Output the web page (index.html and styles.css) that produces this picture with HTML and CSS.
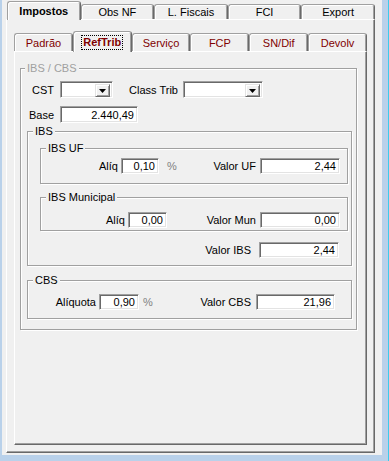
FILE: index.html
```html
<!DOCTYPE html>
<html lang="pt-br">
<head>
  <meta charset="UTF-8" />
  <title>Impostos - RefTrib</title>
  <link rel="stylesheet" href="styles.css">
</head>
<body>

<div class="window">
  <div class="outer">
    <div class="tabrow">
      <div class="tab active">Impostos</div>
      <div class="tab">Obs NF</div>
      <div class="tab">L. Fiscais</div>
      <div class="tab">FCI</div>
      <div class="tab">Export</div>
    </div>

    <div class="page outer-page">
      <div class="inner">
        <div class="tabrow">
          <div class="tab sub">Padrão</div>
          <div class="tab sub active"><span class="focus">RefTrib</span></div>
          <div class="tab sub">Serviço</div>
          <div class="tab sub">FCP</div>
          <div class="tab sub">SN/Dif</div>
          <div class="tab sub">Devolv</div>
        </div>

        <div class="page inner-page">
          <!-- IBS / CBS -->
          <fieldset class="group grp-main">
            <legend class="off">IBS / CBS</legend>

            <div class="row row-cst">
              <span class="lbl lbl-cst">CST</span>
              <div class="combo combo-cst">
                <span class="combo-btn"><svg width="7" height="4"><path d="M0 0h7L3.5 4z"/></svg></span>
              </div>
              <span class="lbl lbl-class">Class Trib</span>
              <div class="combo combo-class">
                <span class="combo-btn"><svg width="7" height="4"><path d="M0 0h7L3.5 4z"/></svg></span>
              </div>
            </div>

            <div class="row row-base">
              <span class="lbl lbl-cst">Base</span>
              <input class="inp inp-base" type="text" value="2.440,49" readonly>
            </div>

            <fieldset class="group grp-ibs">
              <legend>IBS</legend>

              <fieldset class="group grp-sub grp-uf">
                <legend>IBS UF</legend>
                <div class="row row-uf">
                  <span class="lbl lbl-aliq-uf">Alíq</span>
                  <input class="inp inp-aliq-uf" type="text" value="0,10" readonly>
                  <span class="pct">%</span>
                  <div class="rgrp rgrp-sub">
                    <span class="lbl">Valor UF</span>
                    <input class="inp inp-valor" type="text" value="2,44" readonly>
                  </div>
                </div>
              </fieldset>

              <fieldset class="group grp-sub grp-mun">
                <legend>IBS Municipal</legend>
                <div class="row row-mun">
                  <span class="lbl lbl-aliq-mun">Alíq</span>
                  <input class="inp inp-aliq-mun" type="text" value="0,00" readonly>
                  <div class="rgrp rgrp-sub">
                    <span class="lbl">Valor Mun</span>
                    <input class="inp inp-valor" type="text" value="0,00" readonly>
                  </div>
                </div>
              </fieldset>

              <div class="row row-vibs">
                <div class="rgrp rgrp-ibs">
                  <span class="lbl">Valor IBS</span>
                  <input class="inp inp-valor" type="text" value="2,44" readonly>
                </div>
              </div>
            </fieldset>

            <fieldset class="group grp-cbs">
              <legend>CBS</legend>
              <div class="row row-cbs">
                <span class="lbl lbl-aliq-cbs">Alíquota</span>
                <input class="inp inp-aliq-cbs" type="text" value="0,90" readonly>
                <span class="pct pct-cbs">%</span>
                <div class="rgrp rgrp-cbs">
                  <span class="lbl">Valor CBS</span>
                  <input class="inp inp-vcbs" type="text" value="21,96" readonly>
                </div>
              </div>
            </fieldset>
          </fieldset>
        </div>
      </div>
    </div>
  </div>
</div>

</body>
</html>
```

FILE: styles.css
```css
* {
  box-sizing: border-box;
}
body {
  margin: 0;
  height: 461px;
  background: #b9d1ea;
  border-right: 1px solid #3ccbec;
  font-family: 'Liberation Sans', Arial, sans-serif;
  font-size: 11px;
  color: #000;
}
.window {
  margin-left: 2px;
  width: 380px;
  height: 455px;
  background: #f0f0f0;
  padding: 1px 0 0 4px;
}

/* abas */
.outer {
  width: 369px;
}
.tabrow {
  display: flex;
  align-items: flex-end;
}
.outer > .tabrow {
  height: 18px;
  padding-left: 1px;
}
.inner > .tabrow {
  height: 20px;
}
.tab {
  flex: 1;
  height: 15px;
  background: #f0f0f0;
  border: 1px solid #a0a0a0;
  border-right-color: #696969;
  border-bottom: 0;
  border-radius: 3px 3px 0 0;
  box-shadow: inset 1px 1px #fff, inset -1px 0 #a0a0a0;
  text-align: center;
  line-height: 14px;
  white-space: nowrap;
}
.tab.active {
  height: 19px;
  margin-bottom: -1px;
  position: relative;
  z-index: 1;
  padding-top: 2px;
  line-height: 15px;
  font-weight: bold;
}
.tab.sub {
  height: 18px;
  padding-top: 1px;
  line-height: 16px;
  color: #800000;
}
.tab.sub.active {
  height: 21px;
  padding-top: 4px;
  line-height: 13px;
}
.focus {
  display: inline-block;
  padding: 0 1px;
  outline: 1px dotted #000;
}

/* paginas */
.page {
  border: 1px solid;
  border-color: #fff #696969 #696969 #fff;
  box-shadow: inset -1px -1px #a0a0a0;
}
.outer-page {
  height: 434px;
  padding: 11px 0 0 7px;
}
.inner {
  width: 353px;
}
.inner-page {
  height: 394px;
  padding: 10px 0 0 5px;
}

/* grupos */
.group {
  margin: 0;
  padding: 0;
  min-width: 0;
  border: 1px solid #a0a0a0;
  box-shadow: inset 1px 1px #fff, 1px 1px #fff;
}
.group legend {
  margin-left: 5px;
  padding: 0 2px;
  line-height: 13px;
  background: #f0f0f0;
}
.group legend.off {
  margin-left: 4px;
  color: #a0a0a0;
}
.grp-main {
  width: 337px;
  padding-bottom: 10px;
}
.grp-ibs {
  width: 325px;
  margin: 2px 0 0 6px;
  padding-bottom: 7px;
}
.grp-sub {
  width: 308px;
  margin-left: 12px;
}
.grp-uf {
  margin-top: 4px;
  padding-bottom: 9px;
}
.grp-mun {
  margin-top: 7px;
  padding-bottom: 2px;
}
.grp-cbs {
  width: 325px;
  margin: 8px 0 0 6px;
  padding-bottom: 8px;
}

/* linhas */
.row {
  display: flex;
  align-items: center;
}
.lbl {
  text-align: right;
  white-space: nowrap;
}
.row-cst {
  margin-top: 6px;
}
.lbl-cst {
  width: 33px;
}
.combo-cst {
  margin-left: 6px;
  width: 53px;
}
.lbl-class {
  margin-left: 16px;
  width: 49px;
}
.combo-class {
  margin-left: 5px;
  width: 80px;
}
.row-base {
  margin-top: 8px;
}
.row-uf {
  margin-top: 3px;
}
.row-mun {
  margin-top: 8px;
}
.row-vibs {
  margin-top: 11px;
}
.row-cbs {
  margin-top: 7px;
}
.lbl-aliq-uf {
  width: 77px;
}
.lbl-aliq-mun {
  width: 84px;
}
.lbl-aliq-cbs {
  width: 68px;
}
.pct {
  margin-left: 8px;
  color: #808080;
}
.pct-cbs {
  margin-left: 4px;
}
.rgrp {
  margin-left: auto;
  display: flex;
  align-items: center;
}
.rgrp-sub {
  margin-right: 7px;
}
.rgrp-sub .inp {
  margin-left: 4px;
}
.rgrp-ibs {
  margin-right: 12px;
}
.rgrp-ibs .inp {
  margin-left: 8px;
}
.rgrp-cbs {
  margin-right: 16px;
}

/* campos */
.inp {
  height: 16px;
  margin: 0;
  padding: 0 3px 0 0;
  border: 1px solid;
  border-color: #a0a0a0 #fff #fff #a0a0a0;
  box-shadow: inset 1px 1px #696969, inset -1px -1px #e3e3e3;
  background: #fff;
  font: inherit;
  color: #000;
  text-align: right;
  outline: none;
}
.inp-base {
  height: 17px;
  width: 78px;
  margin-left: 6px;
}
.inp-aliq-uf {
  width: 38px;
  margin-left: 3px;
}
.inp-aliq-mun {
  width: 39px;
  margin-left: 3px;
}
.inp-aliq-cbs {
  width: 40px;
  margin-left: 3px;
}
.inp-valor {
  width: 80px;
}
.inp-vcbs {
  width: 79px;
  margin-left: 5px;
}

/* combo */
.combo {
  height: 17px;
  display: flex;
  justify-content: flex-end;
  padding: 2px;
  background: #fff;
  border: 1px solid;
  border-color: #a0a0a0 #fff #fff #a0a0a0;
  box-shadow: inset 1px 1px #696969, inset -1px -1px #e3e3e3;
}
.combo-btn {
  width: 15px;
  height: 13px;
  display: flex;
  align-items: center;
  justify-content: center;
  background: #f0f0f0;
  border: 1px solid;
  border-color: #e3e3e3 #696969 #696969 #e3e3e3;
  box-shadow: inset 1px 1px #fff, inset -1px -1px #a0a0a0;
}
.combo-btn svg {
  display: block;
}
```
